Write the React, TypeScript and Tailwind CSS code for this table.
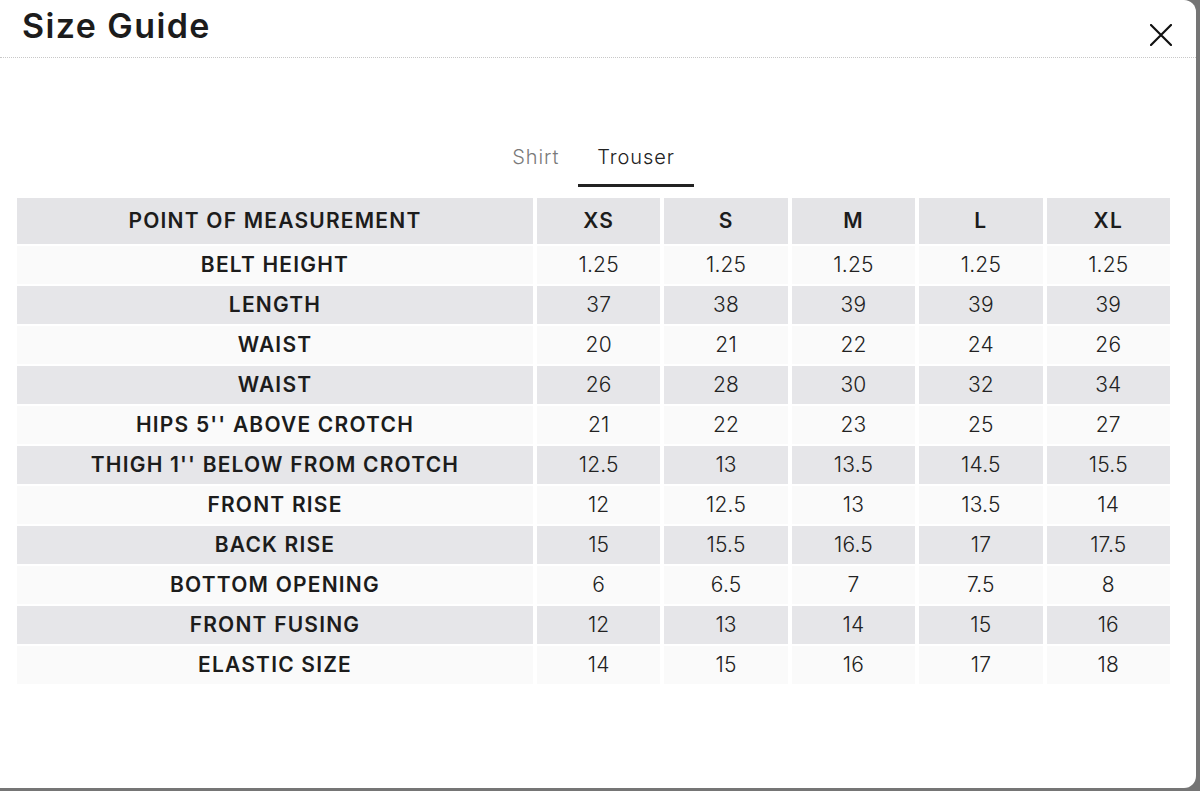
import React, { useState } from "react";

const sizes = ["XS", "S", "M", "L", "XL"];

const rows: [string, string[]][] = [
  ["BELT HEIGHT", ["1.25", "1.25", "1.25", "1.25", "1.25"]],
  ["LENGTH", ["37", "38", "39", "39", "39"]],
  ["WAIST", ["20", "21", "22", "24", "26"]],
  ["WAIST", ["26", "28", "30", "32", "34"]],
  ["HIPS 5'' ABOVE CROTCH", ["21", "22", "23", "25", "27"]],
  ["THIGH 1'' BELOW FROM CROTCH", ["12.5", "13", "13.5", "14.5", "15.5"]],
  ["FRONT RISE", ["12", "12.5", "13", "13.5", "14"]],
  ["BACK RISE", ["15", "15.5", "16.5", "17", "17.5"]],
  ["BOTTOM OPENING", ["6", "6.5", "7", "7.5", "8"]],
  ["FRONT FUSING", ["12", "13", "14", "15", "16"]],
  ["ELASTIC SIZE", ["14", "15", "16", "17", "18"]],
];

const App = () => {
  const [tab, setTab] = useState("Trouser");

  return (
    <div className="h-[791px] w-full bg-[#757575] font-['Inter',sans-serif] text-[#1c1c1c] overflow-hidden">
      <div className="h-[788px] w-[1196px] bg-white rounded-tr-[12px] rounded-br-[12px]">
        {/* header */}
        <div className="h-[58px] flex items-start justify-between border-b border-dotted border-[#c8c8c8] pl-[22px] pr-[24px]">
          <h1 className="text-[34px] font-semibold leading-none pt-[9px] tracking-[1.4px]">Size Guide</h1>
          <button className="mt-[24px] w-[22px] h-[22px]" aria-label="Close">
            <svg viewBox="0 0 22 22" className="w-[22px] h-[22px]">
              <path d="M1 1L21 21M21 1L1 21" stroke="#111" strokeWidth="2.2" strokeLinecap="round" />
            </svg>
          </button>
        </div>

        {/* tabs */}
        <div className="ml-[17px] w-[1153px] flex justify-center mt-[86px]">
          {["Shirt", "Trouser"].map((t) => (
            <button
              key={t}
              onClick={() => setTab(t)}
              className={`px-[19px] pb-[14px] text-[20px] font-light tracking-[0.9px] leading-[26px] border-b-[3px] ${
                tab === t ? "border-[#222] text-[#222]" : "border-transparent text-[#7a7a7a]"
              }`}
            >
              {t}
            </button>
          ))}
        </div>

        {/* table */}
        <div className="ml-[17px] w-[1153px] mt-[11px] grid grid-cols-[516px_repeat(5,1fr)] gap-x-[4px] gap-y-[2px] text-[21px] tracking-[1.2px]">
          <div className="h-[46px] bg-[#e4e4e7] flex items-center justify-center font-semibold">
            POINT OF MEASUREMENT
          </div>
          {sizes.map((s) => (
            <div key={s} className="h-[46px] bg-[#e4e4e7] flex items-center justify-center font-semibold">
              {s}
            </div>
          ))}
          {rows.map(([label, vals], i) => (
            <React.Fragment key={i}>
              <div
                className={`h-[38px] flex items-center justify-center font-semibold ${
                  i % 2 === 0 ? "bg-[#fafafa]" : "bg-[#e6e6e9]"
                }`}
              >
                {label}
              </div>
              {vals.map((v, j) => (
                <div
                  key={j}
                  className={`h-[38px] flex items-center justify-center font-light text-[#222] tracking-[0.2px] ${
                    i % 2 === 0 ? "bg-[#fafafa]" : "bg-[#e6e6e9]"
                  }`}
                >
                  {v}
                </div>
              ))}
            </React.Fragment>
          ))}
        </div>
      </div>
    </div>
  );
};

export default App;
